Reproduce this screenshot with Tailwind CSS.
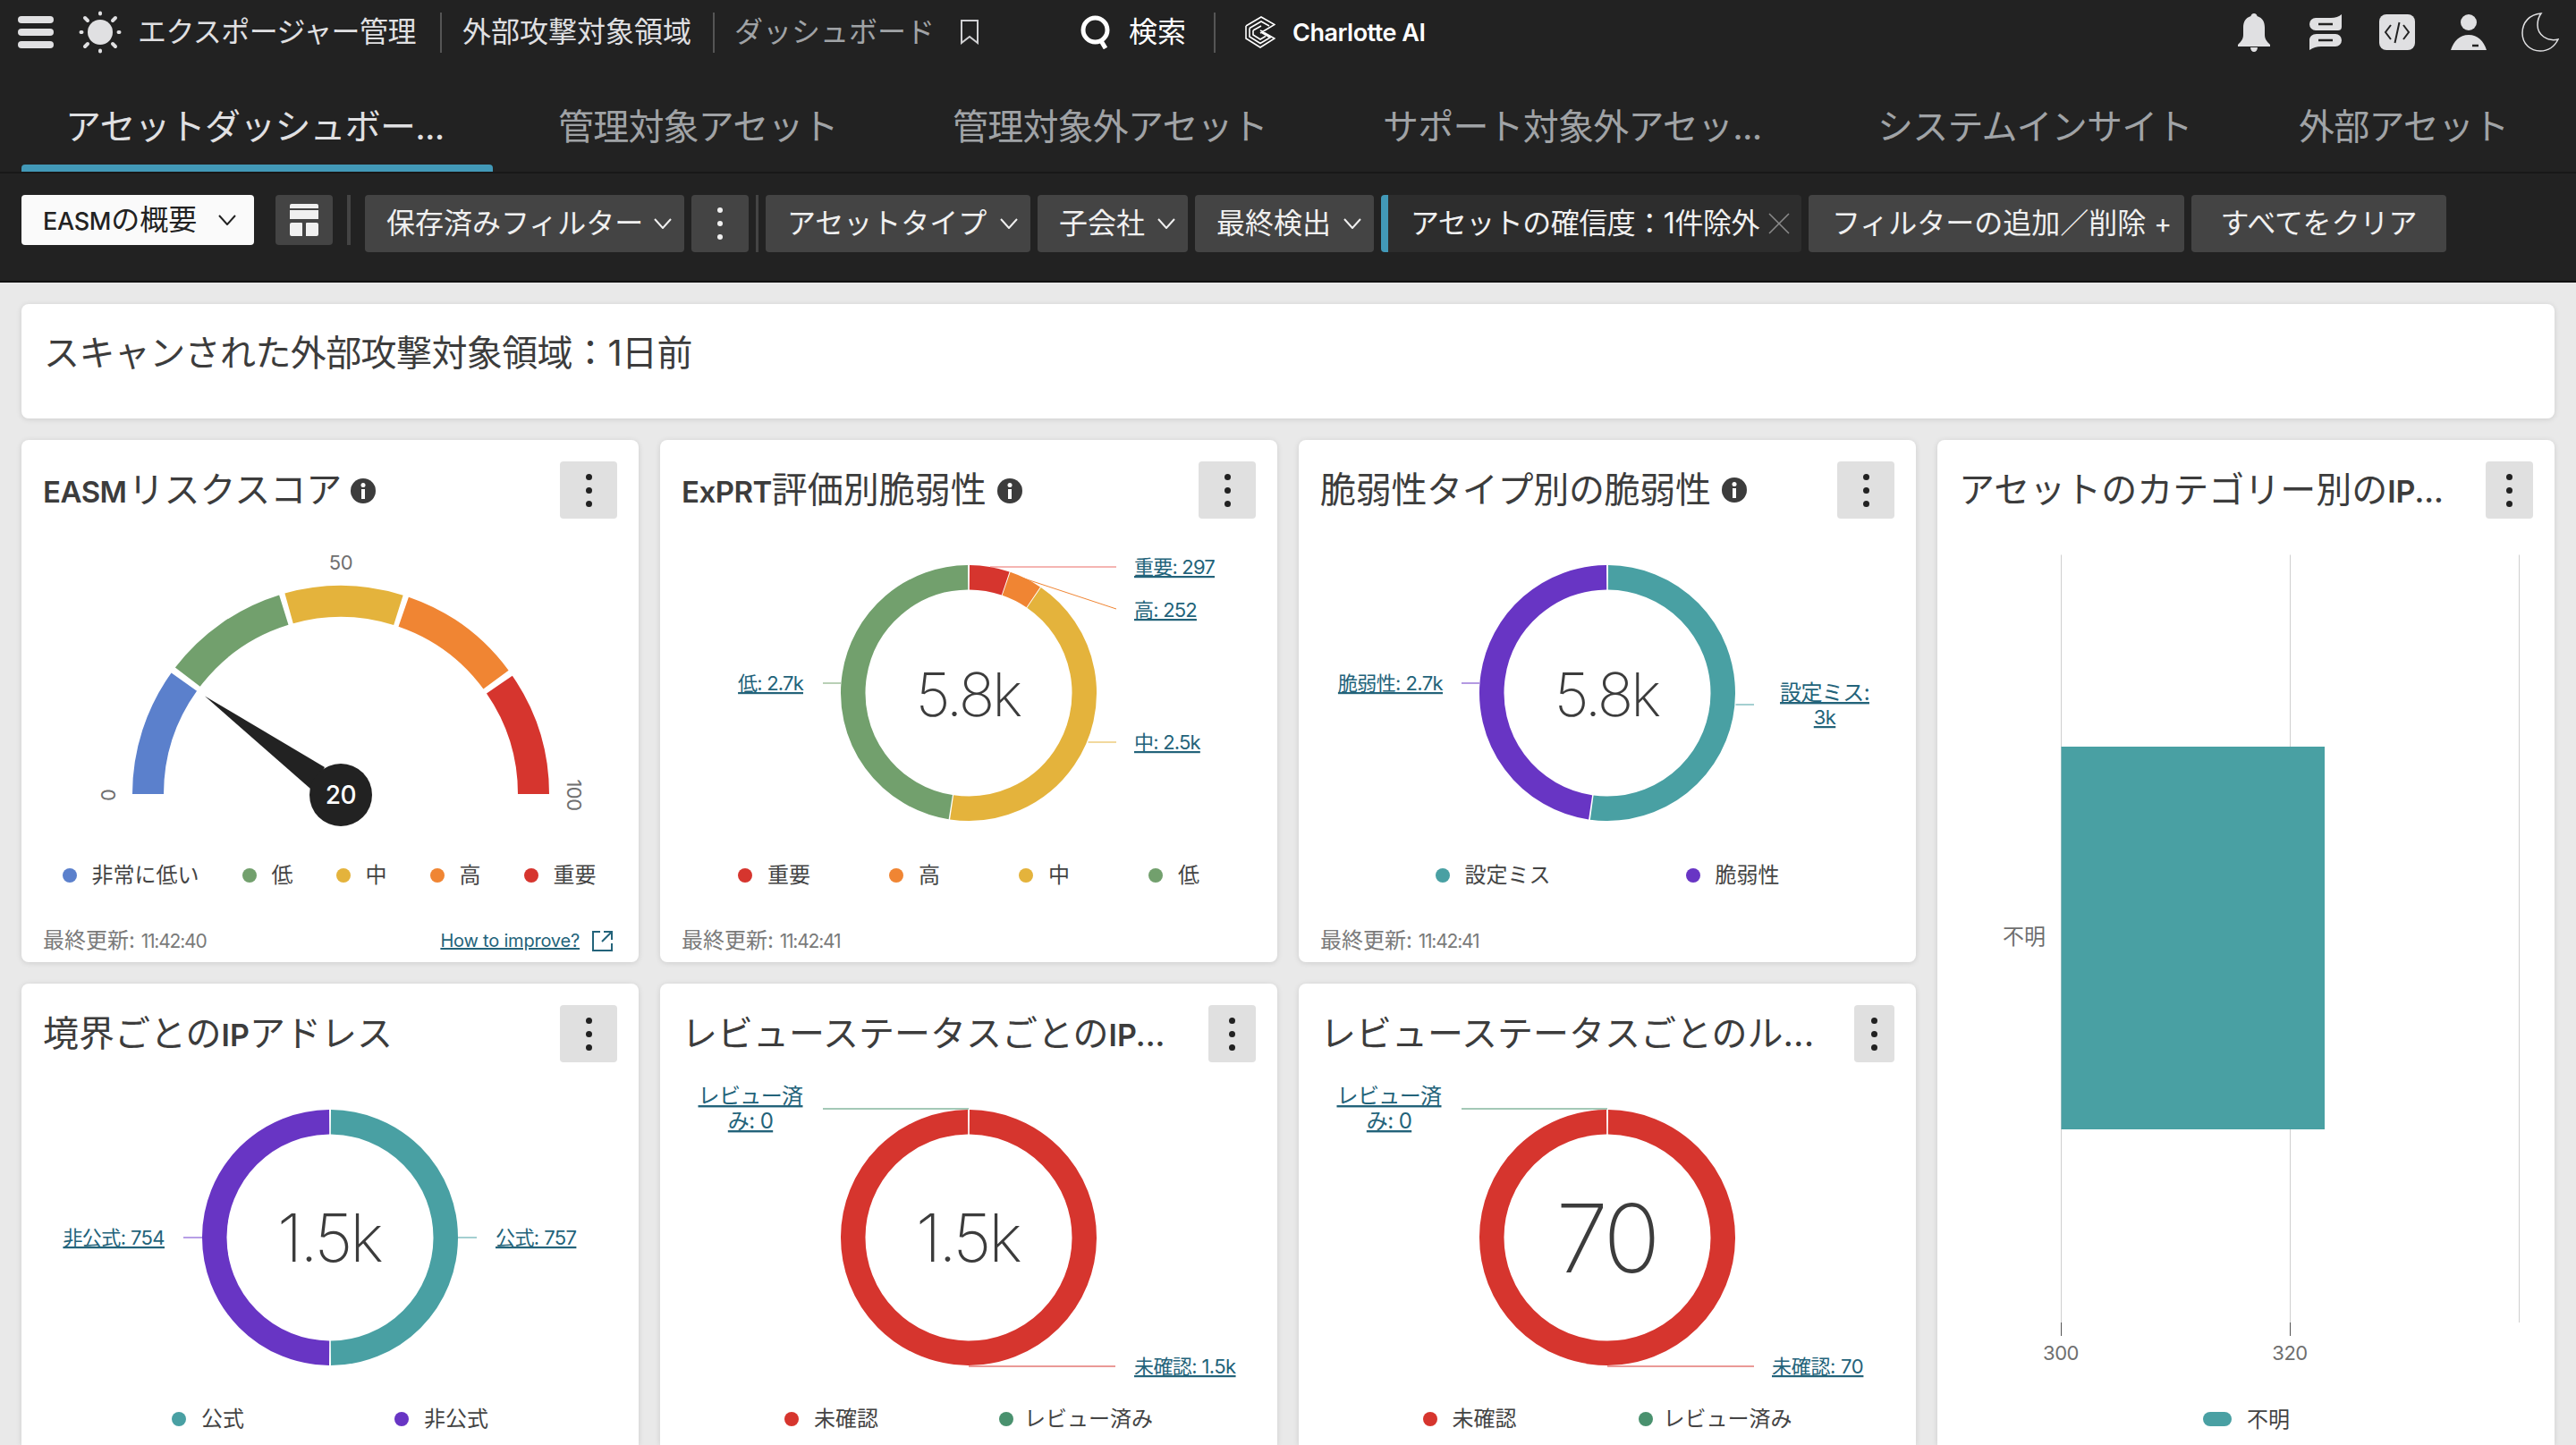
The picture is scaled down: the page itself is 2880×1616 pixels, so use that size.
<!DOCTYPE html>
<html lang="ja">
<head>
  <meta charset="UTF-8" />
  <title>エクスポージャー管理 - ダッシュボード</title>
  <script src="https://cdn.jsdelivr.net/npm/@tailwindcss/browser@4"></script>
</head>
<body class="w-[2880px] h-[1616px] overflow-hidden bg-[#e9e9e9] font-['Inter','Noto_Sans_CJK_JP',sans-serif]">

  <!-- Top nav -->
  <div class="bg-[#222222] h-[72px] flex items-center pl-[20px] text-[32px] text-[#e0e0e2] whitespace-nowrap">
    <div class="w-10 flex flex-col gap-[6px]">
      <span class="block h-2 rounded-full bg-[#e0e0e2]"></span>
      <span class="block h-2 rounded-full bg-[#e0e0e2]"></span>
      <span class="block h-2 rounded-full bg-[#e0e0e2]"></span>
    </div>
    <svg class="ml-[28px] shrink-0" width="48" height="48" viewBox="0 0 48 48" stroke="#e0e0e2" stroke-width="4" stroke-linecap="round">
      <circle cx="24" cy="24" r="14" fill="#e0e0e2" stroke="none"/>
      <path d="M24 2.5v1M24 44.5v1M2.5 24h1M44.5 24h1M7 8l3 3M41 8l-3 3M7 40l3-3M41 40l-3-3"/>
    </svg>
    <span class="ml-[18px] w-[314px] tracking-[-0.6px]">エクスポージャー管理</span>
    <span class="ml-[24px] w-[2px] h-[45px] bg-[#555555]"></span>
    <span class="ml-[23px] w-[257px]">外部攻撃対象領域</span>
    <span class="ml-[23px] w-[2px] h-[45px] bg-[#555555]"></span>
    <span class="ml-[22px] w-[224px] tracking-[0px] text-[#a0a3a6]">ダッシュボード</span>
    <svg class="ml-[28px] shrink-0" width="22" height="28" viewBox="0 0 22 28" fill="none" stroke="#d0d0d2" stroke-width="2"><path d="M2 1h18v25l-9-7-9 7z"/></svg>
    <svg class="ml-[113px] shrink-0" width="34" height="38" viewBox="0 0 34 38" fill="none" stroke="#fff" stroke-width="5"><circle cx="16.5" cy="16.5" r="13.5"/><path d="M22 27l6 10"/></svg>
    <span class="ml-[20px] text-white">検索</span>
    <span class="ml-[31px] w-[2px] h-[45px] bg-[#555555]"></span>
    <svg class="ml-[33px] shrink-0" width="34" height="36" viewBox="0 0 34 36" fill="none" stroke="#fff" stroke-width="1.6"><path d="M1 11 18 1l15 8.500-16 9.500M5 13.500 18 6l9 5M9 16l9-5M1 11v14l16 10 16-10-16-9M5 13.500v9.500l12 7.500 11-6.500-11-6.500M9 16v5l8 5 6-3.500"/></svg>
    <span class="ml-[19px] mt-[2px] text-[27px] font-semibold text-white tracking-[-0.5px]">Charlotte AI</span>
    <div class="ml-auto pr-[19px] flex items-center">
      <svg width="36" height="43" viewBox="0 0 36 43" fill="#e0e0e2"><path d="M18 0c-2 0-3.500 1.500-3.500 3C8 5 6 10 6 16v8c0 5-3 8-6 11v2h36v-2c-3-3-6-6-6-11v-8c0-6-2-11-8.500-13C21.500 1.500 20 0 18 0zM14 38h8c0 3-2 5-4 5s-4-2-4-5z"/></svg>
      <svg class="ml-[44px]" width="36" height="40" viewBox="0 0 36 40"><path fill="#e0e0e2" d="M7 4h17c5 0 9-1.500 12-4v14c0 3-2 4-4 4H7a7 7 0 0 1 0-14zM8 22h21a7 7 0 0 1 0 14H13c-5 0-9 1.500-13 4V29c0-4 3-7 8-7z"/><path stroke="#222" stroke-width="2.500" d="M10 11h16M10 29h16"/></svg>
      <svg class="ml-[42px]" width="40" height="40" viewBox="0 0 40 40" fill="none"><rect width="40" height="40" rx="8" fill="#e0e0e2"/><path stroke="#222" stroke-width="2" d="M13 12l-6 8 6 8M27 12l6 8-6 8M22.500 9l-5 23"/></svg>
      <svg class="ml-[40px]" width="40" height="40" viewBox="0 0 40 40"><circle cx="20" cy="9" r="9" fill="#e0e0e2"/><path fill="#e0e0e2" d="M0 40c3-10 10-17 20-17s17 7 20 17z"/><path stroke="#222" stroke-width="2.500" d="M24 35h7"/></svg>
      <svg class="ml-[39px]" width="42" height="44" viewBox="0 0 42 44" fill="none" stroke="#e0e0e2" stroke-width="1.500"><path d="M22 1C9 2 1 11 1 23c0 12 9 20 20 20 9 0 16-5 20-13-12 3-23-5-23-16 0-5 1-9 4-13z"/></svg>
    </div>
  </div>

  <!-- Tabs -->
  <div class="bg-[#222222] h-[122px] pt-[24px] pl-[24px] border-b-2 border-[#181818] flex gap-6 text-[40px] text-[#a0a3a6] whitespace-nowrap tracking-[-0.8px]">
    <div class="relative w-[527px] pl-[49px] leading-[92px] text-[#e0e0e2]">アセットダッシュボー...<span class="absolute left-0 right-0 bottom-0 h-2 rounded-t bg-[#4299b8]"></span></div>
    <div class="w-[417px] pl-[49px] leading-[92px]">管理対象アセット</div>
    <div class="w-[457px] pl-[49px] leading-[92px]">管理対象外アセット</div>
    <div class="w-[529px] pl-[49px] leading-[92px]">サポート対象外アセッ...</div>
    <div class="w-[447px] pl-[49px] leading-[92px]">システムインサイト</div>
    <div class="w-[330px] pl-[49px] leading-[92px]">外部アセット</div>
  </div>

  <!-- Filter bar -->
  <div class="bg-[#222222] h-[122px] border-b-2 border-[#111111] pt-[24px] pl-[24px] flex items-start text-[32px] text-[#f0f0f0] whitespace-nowrap">
    <div class="w-[260px] h-14 bg-[#fafafa] rounded flex items-center pl-[24px] text-[32px] text-[#222222]">
      <span><b class="text-[27px] font-medium tracking-[-0.3px]">EASM</b>の概要</span>
      <svg class="ml-[24px]" width="20" height="12" viewBox="0 0 20 12" fill="none" stroke="#222" stroke-width="2"><path d="M1 1l9 10 9-10"/></svg>
    </div>
    <div class="ml-6 w-16 h-14 bg-[#444444] rounded flex items-center justify-center">
      <svg width="32" height="36" viewBox="0 0 32 36" fill="#f0f0f0"><path d="M2 0h28a2 2 0 0 1 2 2v3H0V2a2 2 0 0 1 2-2zM0 7h32v10H0zM2 21h11a1 1 0 0 1 1 1v14H2a2 2 0 0 1-2-2V23a2 2 0 0 1 2-2zM18 22a1 1 0 0 1 1-1h11a2 2 0 0 1 2 2v11a2 2 0 0 1-2 2H18z"/></svg>
    </div>
    <span class="ml-4 w-1 h-14 bg-[#444444]"></span>
    <div class="ml-4 flex gap-2 items-start">
      <div class="w-[357px] h-16 bg-[#444444] rounded flex items-center justify-between pl-[24px] pr-[14px]">保存済みフィルター
        <svg width="20" height="12" viewBox="0 0 20 12" fill="none" stroke="#f0f0f0" stroke-width="2"><path d="M1 1l9 10 9-10"/></svg>
      </div>
      <div class="w-16 h-16 bg-[#444444] rounded flex flex-col items-center justify-center gap-[9px]">
        <span class="size-[6px] rounded-full bg-[#f0f0f0]"></span><span class="size-[6px] rounded-full bg-[#f0f0f0]"></span><span class="size-[6px] rounded-full bg-[#f0f0f0]"></span>
      </div>
      <span class="w-[3px] h-16 bg-[#444444]"></span>
      <div class="w-[296px] h-16 bg-[#444444] rounded flex items-center justify-between pl-[24px] pr-[14px]">アセットタイプ
        <svg width="20" height="12" viewBox="0 0 20 12" fill="none" stroke="#f0f0f0" stroke-width="2"><path d="M1 1l9 10 9-10"/></svg>
      </div>
      <div class="w-[168px] h-16 bg-[#444444] rounded flex items-center justify-between pl-[24px] pr-[14px]">子会社
        <svg width="20" height="12" viewBox="0 0 20 12" fill="none" stroke="#f0f0f0" stroke-width="2"><path d="M1 1l9 10 9-10"/></svg>
      </div>
      <div class="w-[200px] h-16 bg-[#444444] rounded flex items-center justify-between pl-[24px] pr-[14px]">最終検出
        <svg width="20" height="12" viewBox="0 0 20 12" fill="none" stroke="#f0f0f0" stroke-width="2"><path d="M1 1l9 10 9-10"/></svg>
      </div>
      <div class="w-[470px] h-16 bg-[#2d2d2d] rounded border-l-[8px] border-[#4299b8] flex items-center justify-between pl-[25px] pr-[12px] tracking-[-0.5px]">アセットの確信度：1件除外
        <svg width="26" height="24" viewBox="0 0 26 24" fill="none" stroke="#8a8a8a" stroke-width="1.500"><path d="M2 1l22 22M24 1L2 23"/></svg>
      </div>
      <div class="w-[420px] h-16 bg-[#444444] rounded flex items-center justify-between pl-[26px] pr-[14px]">フィルターの追加／削除
        <span class="text-[30px]">+</span>
      </div>
      <div class="w-[285px] h-16 bg-[#444444] rounded flex items-center justify-center">すべてをクリア</div>
    </div>
  </div>

  <!-- Dashboard -->
  <div class="px-6 pt-6">
    <div class="h-[128px] bg-white rounded-lg shadow-[0_1px_6px_rgba(0,0,0,0.12)] flex items-center pl-[25px] pb-[18px] text-[40px] tracking-[-0.6px] text-[#3c3c3c] mb-6">スキャンされた外部攻撃対象領域：1日前</div>

    <div class="grid grid-cols-4 gap-6 grid-rows-[584px_516px] whitespace-nowrap">

      <!-- EASM risk score -->
      <div class="bg-white rounded-lg shadow-[0_1px_6px_rgba(0,0,0,0.12)] flex flex-col">
        <div class="flex items-start justify-between pt-6 pr-6 pl-6 h-[88px]">
          <div class="flex items-center text-[40px] leading-[64px] text-[#3c3c3c]"><span><b class="font-semibold text-[33px] tracking-[-0.5px]">EASM</b><span class="ml-[2px]">リスクスコア</span></span>
            <svg class="ml-[10px]" width="28" height="28" viewBox="0 0 28 28"><circle cx="14" cy="14" r="14" fill="#3c3c3c"/><rect x="12" y="12" width="4" height="11" fill="#fff"/><circle cx="14" cy="7.500" r="2.500" fill="#fff"/></svg>
          </div>
          <div class="w-16 h-16 rounded-sm bg-[#e0e0e0] flex flex-col items-center justify-center gap-2"><span class="size-[7px] rounded-full bg-[#222222]"></span><span class="size-[7px] rounded-full bg-[#222222]"></span><span class="size-[7px] rounded-full bg-[#222222]"></span></div>
        </div>
        <svg class="block shrink-0" width="690" height="376" viewBox="0 0 690 376" fill="none">
          <g stroke-width="35">
            <path stroke="#5b80cc" d="M141.500 308A215.500 215.500 0 0 1 181.800 182.600"/>
            <path stroke="#72a06d" d="M185.800 177.100A215.500 215.500 0 0 1 293.300 102.100"/>
            <path stroke="#e4b33c" d="M299.100 100.400A215.500 215.500 0 0 1 421.400 102.400"/>
            <path stroke="#f08533" d="M427.200 104.200A215.500 215.500 0 0 1 530.500 180.100"/>
            <path stroke="#d6352e" d="M534.400 185.600A215.500 215.500 0 0 1 572.500 308"/>
          </g>
          <polygon points="205,198.500 339,278 323,302" fill="#222222"/>
          <circle cx="357" cy="309" r="35" fill="#222222"/>
          <text x="357" y="319" text-anchor="middle" class="text-[28px] font-medium fill-white tracking-[-0.5px]">20</text>
          <text x="357" y="57" text-anchor="middle" class="text-[22px] fill-[#6f6f6f] tracking-[-0.5px]">50</text>
          <text transform="translate(105 309) rotate(-90)" text-anchor="middle" class="text-[22px] fill-[#6f6f6f]">0</text>
          <text transform="translate(610 309) rotate(90)" text-anchor="middle" class="text-[22px] fill-[#6f6f6f] tracking-[-0.5px]">100</text>
        </svg>
        <div class="h-[46px] flex items-center justify-center gap-[48px] text-[24px] text-[#444444] -ml-[2px]">
          <div class="flex items-center gap-[17px]"><span class="size-4 rounded-full bg-[#5b80cc]"></span>非常に低い</div>
          <div class="flex items-center gap-[17px]"><span class="size-4 rounded-full bg-[#72a06d]"></span>低</div>
          <div class="flex items-center gap-[17px]"><span class="size-4 rounded-full bg-[#e4b33c]"></span>中</div>
          <div class="flex items-center gap-[17px]"><span class="size-4 rounded-full bg-[#f08533]"></span>高</div>
          <div class="flex items-center gap-[17px]"><span class="size-4 rounded-full bg-[#d6352e]"></span>重要</div>
        </div>
        <div class="mt-auto h-[48px] flex items-center justify-between pl-6 pr-[28px] text-[24px] text-[#7a7a7a]">
          <span>最終更新: <span class="text-[21px] tracking-[-1.2px]">11:42:40</span></span>
          <span class="flex items-center gap-[13px] text-[20px] text-[#23637a]"><span class="underline tracking-[-0.2px]">How to improve?</span>
            <svg width="25" height="25" viewBox="0 0 25 25" fill="none" stroke="#23637a" stroke-width="2"><path d="M10 2H2v21h21v-8M14 2h9v9M23 2L12 13"/></svg>
          </span>
        </div>
      </div>

      <!-- ExPRT -->
      <div class="bg-white rounded-lg shadow-[0_1px_6px_rgba(0,0,0,0.12)] flex flex-col">
        <div class="flex items-start justify-between pt-6 pr-6 pl-6 h-[88px]">
          <div class="flex items-center text-[40px] leading-[64px] text-[#3c3c3c]"><span><b class="font-semibold text-[33px] tracking-[-0.5px]">ExPRT</b>評価別脆弱性</span>
            <svg class="ml-[12px]" width="28" height="28" viewBox="0 0 28 28"><circle cx="14" cy="14" r="14" fill="#3c3c3c"/><rect x="12" y="12" width="4" height="11" fill="#fff"/><circle cx="14" cy="7.500" r="2.500" fill="#fff"/></svg>
          </div>
          <div class="w-16 h-16 rounded-sm bg-[#e0e0e0] flex flex-col items-center justify-center gap-2"><span class="size-[7px] rounded-full bg-[#222222]"></span><span class="size-[7px] rounded-full bg-[#222222]"></span><span class="size-[7px] rounded-full bg-[#222222]"></span></div>
        </div>
        <svg class="block shrink-0" width="690" height="376" viewBox="0 0 690 376" fill="none">
          <g stroke-width="27.500">
            <circle cx="345" cy="195" r="129.250" pathLength="360" stroke="#d6352e" stroke-dasharray="18.200 400" transform="rotate(-89.600 345 195)"/>
            <circle cx="345" cy="195" r="129.250" pathLength="360" stroke="#f08533" stroke-dasharray="15 400" transform="rotate(-71 345 195)"/>
            <circle cx="345" cy="195" r="129.250" pathLength="360" stroke="#e4b33c" stroke-dasharray="154 400" transform="rotate(-55.600 345 195)"/>
            <circle cx="345" cy="195" r="129.250" pathLength="360" stroke="#72a06d" stroke-dasharray="170.600 400" transform="rotate(99 345 195)"/>
          </g>
          <g stroke-width="1">
            <path stroke="#ea6b65" d="M369 54H510"/>
            <path stroke="#f08533" d="M404 66L510 101"/>
            <path stroke="#e4b33c" d="M478.500 250H510"/>
            <path stroke="#72a06d" d="M182 184H202"/>
          </g>
          <text x="344" y="221" text-anchor="middle" class="text-[67px] font-extralight fill-[#3c3c3c] tracking-[-3px]">5.8k</text>
          <g class="text-[22px] fill-[#23637a] underline tracking-[-0.8px]">
            <text x="530" y="62">重要: 297</text>
            <text x="530" y="110">高: 252</text>
            <text x="530" y="258">中: 2.5k</text>
            <text x="160" y="192" text-anchor="end">低: 2.7k</text>
          </g>
        </svg>
        <div class="h-[46px] flex items-center justify-center gap-[88px] text-[24px] text-[#444444]">
          <div class="flex items-center gap-[17px]"><span class="size-4 rounded-full bg-[#d6352e]"></span>重要</div>
          <div class="flex items-center gap-[17px]"><span class="size-4 rounded-full bg-[#f08533]"></span>高</div>
          <div class="flex items-center gap-[17px]"><span class="size-4 rounded-full bg-[#e4b33c]"></span>中</div>
          <div class="flex items-center gap-[17px]"><span class="size-4 rounded-full bg-[#72a06d]"></span>低</div>
        </div>
        <div class="mt-auto h-[48px] flex items-center pl-6 text-[24px] text-[#7a7a7a]">
          <span>最終更新: <span class="text-[21px] tracking-[-1.2px]">11:42:41</span></span>
        </div>
      </div>

      <!-- Vulnerability type -->
      <div class="bg-white rounded-lg shadow-[0_1px_6px_rgba(0,0,0,0.12)] flex flex-col">
        <div class="flex items-start justify-between pt-6 pr-6 pl-6 h-[88px]">
          <div class="flex items-center text-[40px] leading-[64px] text-[#3c3c3c] tracking-[-0.3px]"><span>脆弱性タイプ別の脆弱性</span>
            <svg class="ml-[12px]" width="28" height="28" viewBox="0 0 28 28"><circle cx="14" cy="14" r="14" fill="#3c3c3c"/><rect x="12" y="12" width="4" height="11" fill="#fff"/><circle cx="14" cy="7.500" r="2.500" fill="#fff"/></svg>
          </div>
          <div class="w-16 h-16 rounded-sm bg-[#e0e0e0] flex flex-col items-center justify-center gap-2"><span class="size-[7px] rounded-full bg-[#222222]"></span><span class="size-[7px] rounded-full bg-[#222222]"></span><span class="size-[7px] rounded-full bg-[#222222]"></span></div>
        </div>
        <svg class="block shrink-0" width="690" height="376" viewBox="0 0 690 376" fill="none">
          <g stroke-width="27.500">
            <circle cx="345" cy="195" r="129.250" pathLength="360" stroke="#49a0a3" stroke-dasharray="187.300 400" transform="rotate(-89.600 345 195)"/>
            <circle cx="345" cy="195" r="129.250" pathLength="360" stroke="#6835c4" stroke-dasharray="171.200 400" transform="rotate(98.400 345 195)"/>
          </g>
          <g stroke-width="1">
            <path stroke="#6835c4" d="M182 184H202"/>
            <path stroke="#49a0a3" d="M488.500 208H509"/>
          </g>
          <text x="344" y="221" text-anchor="middle" class="text-[67px] font-extralight fill-[#3c3c3c] tracking-[-3px]">5.8k</text>
          <g class="text-[22px] fill-[#23637a] underline tracking-[-0.6px]">
            <text x="161" y="192" text-anchor="end">脆弱性: 2.7k</text>
            <text x="588" y="203" text-anchor="middle" class="text-[24px]">設定ミス:</text>
            <text x="588" y="230" text-anchor="middle">3k</text>
          </g>
        </svg>
        <div class="h-[46px] flex items-center justify-center gap-[151px] text-[24px] text-[#444444]">
          <div class="flex items-center gap-[17px]"><span class="size-4 rounded-full bg-[#49a0a3]"></span>設定ミス</div>
          <div class="flex items-center gap-[17px]"><span class="size-4 rounded-full bg-[#6835c4]"></span>脆弱性</div>
        </div>
        <div class="mt-auto h-[48px] flex items-center pl-6 text-[24px] text-[#7a7a7a]">
          <span>最終更新: <span class="text-[21px] tracking-[-1.2px]">11:42:41</span></span>
        </div>
      </div>

      <!-- IP by category -->
      <div class="row-span-2 bg-white rounded-t-lg shadow-[0_1px_6px_rgba(0,0,0,0.12)] flex flex-col">
        <div class="flex items-start justify-between pt-6 pr-6 pl-6 h-[88px]">
          <span class="text-[40px] leading-[64px] text-[#3c3c3c]">アセットのカテゴリー別の<b class="font-semibold text-[34px]">IP...</b></span>
          <div class="w-[53px] h-16 rounded-sm bg-[#e0e0e0] flex flex-col items-center justify-center gap-2"><span class="size-[7px] rounded-full bg-[#222222]"></span><span class="size-[7px] rounded-full bg-[#222222]"></span><span class="size-[7px] rounded-full bg-[#222222]"></span></div>
        </div>
        <svg class="block shrink-0" width="690" height="1036" viewBox="0 0 690 1036" fill="none">
          <path stroke="#cfcfcf" d="M138.500 40.500V899M394.500 40.500V899M650.500 40.500V899"/>
          <path stroke="#555555" d="M138.500 899V914M394.500 899V914"/>
          <rect x="138.500" y="255" width="294.500" height="428" fill="#49a0a3"/>
          <text x="121" y="476" text-anchor="end" class="text-[24px] fill-[#6f6f6f]">不明</text>
          <text x="138" y="941" text-anchor="middle" class="text-[22px] fill-[#6f6f6f] tracking-[-0.5px]">300</text>
          <text x="394" y="941" text-anchor="middle" class="text-[22px] fill-[#6f6f6f] tracking-[-0.5px]">320</text>
          <rect x="297" y="999" width="32" height="16" rx="8" fill="#49a0a3"/>
          <text x="346" y="1016" class="text-[24px] fill-[#444444]">不明</text>
        </svg>
      </div>

      <!-- IP by boundary -->
      <div class="bg-white rounded-t-lg shadow-[0_1px_6px_rgba(0,0,0,0.12)] flex flex-col">
        <div class="flex items-start justify-between pt-6 pr-6 pl-6 h-[88px]">
          <span class="text-[40px] leading-[64px] text-[#3c3c3c]">境界ごとの<b class="font-semibold text-[34px]">IP</b>アドレス</span>
          <div class="w-16 h-16 rounded-sm bg-[#e0e0e0] flex flex-col items-center justify-center gap-2"><span class="size-[7px] rounded-full bg-[#222222]"></span><span class="size-[7px] rounded-full bg-[#222222]"></span><span class="size-[7px] rounded-full bg-[#222222]"></span></div>
        </div>
        <svg class="block shrink-0" width="690" height="376" viewBox="0 0 690 376" fill="none">
          <g stroke-width="27.500">
            <circle cx="345" cy="196" r="129.250" pathLength="360" stroke="#49a0a3" stroke-dasharray="179.200 400" transform="rotate(-89.600 345 196)"/>
            <circle cx="345" cy="196" r="129.250" pathLength="360" stroke="#6835c4" stroke-dasharray="179.200 400" transform="rotate(90.400 345 196)"/>
          </g>
          <path stroke="#b79fe6" stroke-width="2" d="M181 196H202"/>
          <path stroke="#a4cfd1" stroke-width="2" d="M488 196H509"/>
          <text x="344" y="223" text-anchor="middle" class="text-[74px] font-extralight fill-[#3c3c3c] tracking-[-3px]">1.5k</text>
          <g class="text-[22px] fill-[#23637a] underline tracking-[-0.6px]">
            <text x="160" y="204" text-anchor="end">非公式: 754</text>
            <text x="530" y="204">公式: 757</text>
          </g>
        </svg>
        <div class="h-[46px] flex items-center justify-center gap-[168px] text-[24px] text-[#444444]">
          <div class="flex items-center gap-[17px]"><span class="size-4 rounded-full bg-[#49a0a3]"></span>公式</div>
          <div class="flex items-center gap-[17px]"><span class="size-4 rounded-full bg-[#6835c4]"></span>非公式</div>
        </div>
      </div>

      <!-- IP by review status -->
      <div class="bg-white rounded-t-lg shadow-[0_1px_6px_rgba(0,0,0,0.12)] flex flex-col">
        <div class="flex items-start justify-between pt-6 pr-6 pl-6 h-[88px]">
          <span class="text-[40px] leading-[64px] text-[#3c3c3c]">レビューステータスごとの<b class="font-semibold text-[34px]">IP...</b></span>
          <div class="w-[53px] h-16 rounded-sm bg-[#e0e0e0] flex flex-col items-center justify-center gap-2"><span class="size-[7px] rounded-full bg-[#222222]"></span><span class="size-[7px] rounded-full bg-[#222222]"></span><span class="size-[7px] rounded-full bg-[#222222]"></span></div>
        </div>
        <svg class="block shrink-0" width="690" height="376" viewBox="0 0 690 376" fill="none">
          <circle cx="345" cy="196" r="129.250" pathLength="360" stroke="#d6352e" stroke-width="27.500" stroke-dasharray="359.200 400" transform="rotate(-89.600 345 196)"/>
          <path stroke="#49916e" d="M182 52H345"/>
          <path stroke="#d6352e" d="M345 340H509"/>
          <text x="344" y="223" text-anchor="middle" class="text-[74px] font-extralight fill-[#3c3c3c] tracking-[-3px]">1.5k</text>
          <g class="text-[22px] fill-[#23637a] underline tracking-[-0.6px]">
            <text x="101" y="46" text-anchor="middle" class="text-[24px]">レビュー済</text>
            <text x="101" y="74" text-anchor="middle" class="text-[24px]">み: 0</text>
            <text x="530" y="348">未確認: 1.5k</text>
          </g>
        </svg>
        <div class="h-[46px] flex items-center justify-center gap-[135px] text-[24px] text-[#444444]">
          <div class="flex items-center gap-[17px]"><span class="size-4 rounded-full bg-[#d6352e]"></span>未確認</div>
          <div class="flex items-center gap-[12px]"><span class="size-4 rounded-full bg-[#49916e]"></span><span>レビュー済み</span></div>
        </div>
      </div>

      <!-- Rules by review status -->
      <div class="bg-white rounded-t-lg shadow-[0_1px_6px_rgba(0,0,0,0.12)] flex flex-col">
        <div class="flex items-start justify-between pt-6 pr-6 pl-6 h-[88px]">
          <span class="text-[40px] leading-[64px] text-[#3c3c3c]">レビューステータスごとのル...</span>
          <div class="w-[45px] h-16 rounded-sm bg-[#e0e0e0] flex flex-col items-center justify-center gap-2"><span class="size-[7px] rounded-full bg-[#222222]"></span><span class="size-[7px] rounded-full bg-[#222222]"></span><span class="size-[7px] rounded-full bg-[#222222]"></span></div>
        </div>
        <svg class="block shrink-0" width="690" height="376" viewBox="0 0 690 376" fill="none">
          <circle cx="345" cy="196" r="129.250" pathLength="360" stroke="#d6352e" stroke-width="27.500" stroke-dasharray="359.200 400" transform="rotate(-89.600 345 196)"/>
          <path stroke="#49916e" d="M182 52H345"/>
          <path stroke="#d6352e" d="M345 340H509"/>
          <text x="344" y="235" text-anchor="middle" class="text-[106px] font-extralight fill-[#3c3c3c] tracking-[-4px]">70</text>
          <g class="text-[22px] fill-[#23637a] underline tracking-[-0.6px]">
            <text x="101" y="46" text-anchor="middle" class="text-[24px]">レビュー済</text>
            <text x="101" y="74" text-anchor="middle" class="text-[24px]">み: 0</text>
            <text x="529" y="348" class="tracking-[-0.3px]">未確認: 70</text>
          </g>
        </svg>
        <div class="h-[46px] flex items-center justify-center gap-[136px] text-[24px] text-[#444444]">
          <div class="flex items-center gap-[17px]"><span class="size-4 rounded-full bg-[#d6352e]"></span>未確認</div>
          <div class="flex items-center gap-[12px]"><span class="size-4 rounded-full bg-[#49916e]"></span><span>レビュー済み</span></div>
        </div>
      </div>

    </div>
  </div>

</body>
</html>
